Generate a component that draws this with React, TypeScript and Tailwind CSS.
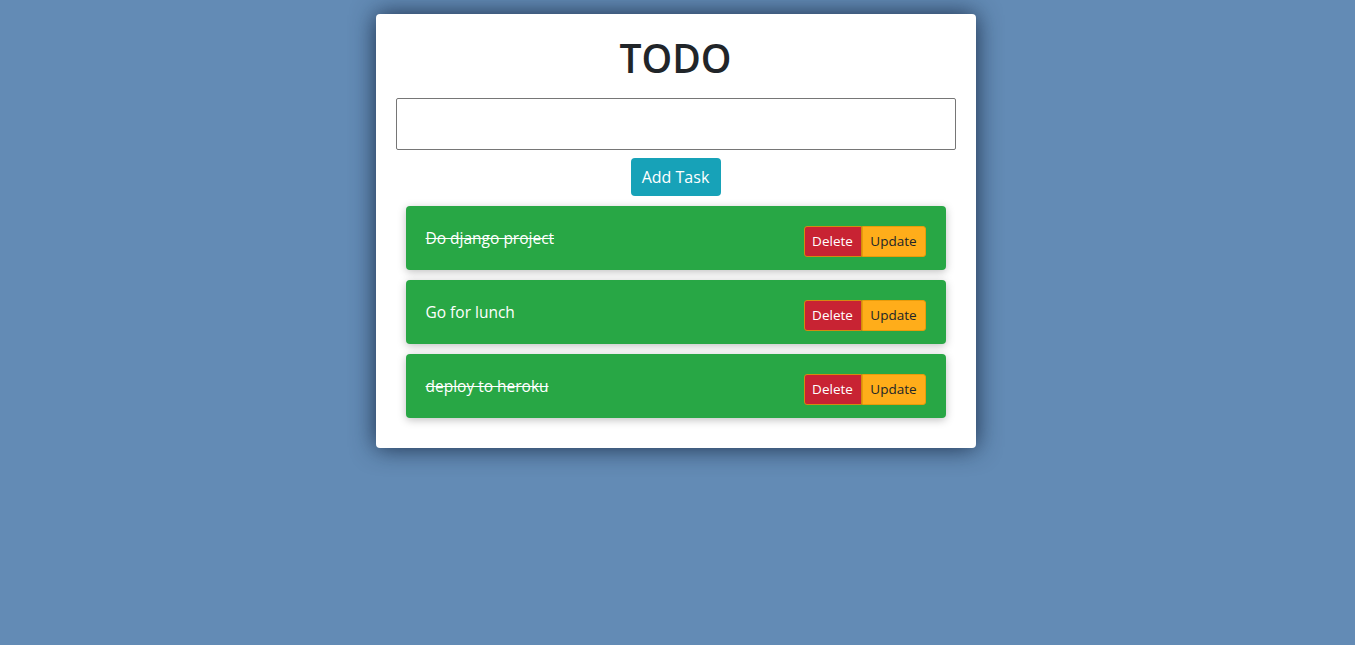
import React from "react"

const tasks = [
    { title: "Do django project", done: true },
    { title: "Go for lunch", done: false },
    { title: "deploy to heroku", done: true },
]

export default function App() {
    return (
        <main className="min-h-screen bg-[#638bb5] pt-[14px] pr-[4px] font-['Open_Sans',sans-serif]">
            <section className="mx-auto w-[600px] rounded-[4px] bg-white px-[20px] pt-[20px] pb-[30px] shadow-[0_0_24px_rgba(15,30,55,0.85)]">
                <h1 className="text-center text-[39px] leading-[48px] font-semibold text-[#212529]">TODO</h1>
                <input type="text" className="mt-[16px] block h-[52px] w-full rounded-[2px] border border-[#767676] bg-white px-3 outline-none" />
                <div className="mt-[8px] flex justify-center">
                    <button className="h-[38px] w-[90px] rounded-[4px] bg-[#17a2b8] text-[16px] text-white">Add Task</button>
                </div>
                <div className="mt-[10px] flex flex-col gap-[10px] px-[10px]">
                    {tasks.map((task) => (
                        <div key={task.title} className="flex h-[64px] items-center justify-between rounded-[4px] bg-[#28a745] px-[20px] shadow-[0_2px_8px_rgba(0,0,0,0.25)]">
                            <span className={"mt-[2px] text-[15.5px] text-white " + (task.done ? "line-through" : "")}>{task.title}</span>
                            <div className="mt-[7px] flex">
                                <button className="h-[31px] w-[58px] rounded-l-[3px] border border-[#d48a10] bg-[#c82333] text-[13.5px] text-white">Delete</button>
                                <button className="h-[31px] w-[64px] rounded-r-[3px] border border-[#e89c0a] bg-[#ffad1a] text-[13.5px] text-[#212529]">Update</button>
                            </div>
                        </div>
                    ))}
                </div>
            </section>
        </main>
    )
}
